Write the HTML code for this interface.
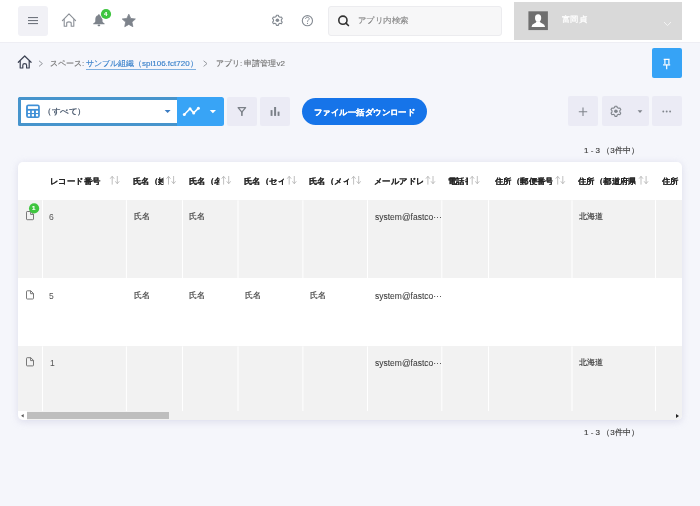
<!DOCTYPE html>
<html lang="ja">
<head>
<meta charset="utf-8">
<style>
*{box-sizing:border-box;margin:0;padding:0}
html,body{width:700px;height:506px;overflow:hidden}
body{background:#f5f6fb;font-family:"Liberation Sans",sans-serif;font-size:8px;color:#333;position:relative}
.a{position:absolute}
.t{white-space:nowrap;line-height:1;-webkit-text-stroke:0.15px currentColor;will-change:transform}
.hd{font-weight:bold;color:#262626;overflow:hidden;-webkit-text-stroke:0.05px currentColor;font-size:8.3px}
.cl{color:#444;-webkit-text-stroke:0.2px currentColor}
.gb{background:#ebebf5;border-radius:2px}
#ov{position:absolute;left:0;top:0;pointer-events:none}
</style>
</head>
<body>
<div class="a" style="left:0;top:0;width:700px;height:43px;background:#fff;border-bottom:1px solid #eeeef4"></div>
<div class="a" style="left:18px;top:6px;width:30px;height:29.5px;background:#f1f1f6;border-radius:3px"></div>
<div class="a" style="left:328px;top:6px;width:174px;height:29.5px;background:#f7f7f8;border:1px solid #ececef;border-radius:3px"></div>
<div class="a t" style="left:358.4px;top:16.3px;color:#8a8a8a;font-size:8.4px;transform:scaleX(1.06);transform-origin:0 0">アプリ内検索</div>
<div class="a" style="left:514px;top:2px;width:168px;height:38px;background:#d9d9d9"></div>
<div class="a t" style="left:562px;top:15.3px;color:#fff;font-size:8.4px;-webkit-text-stroke:0.2px #fff;transform:scaleX(1.04);transform-origin:0 0">富岡貞</div>
<div class="a t" style="left:104px;top:10.5px;width:4px;color:#fff;font-size:6px;font-weight:bold;z-index:2">4</div>

<div class="a t" style="left:50px;top:59.5px;color:#777">スペース:</div>
<div class="a t" style="left:86px;top:59.5px;width:110px;height:9.5px;color:#3b82cb;border-bottom:1px solid #7fb0e0;overflow:hidden">サンプル組織（spl106.fct720）</div>
<div class="a t" style="left:216px;top:59.5px;color:#777">アプリ: 申請管理v2</div>
<div class="a" style="left:652px;top:48px;width:30px;height:30px;background:#36a3f6;border-radius:2px"></div>

<div class="a" style="left:18px;top:97px;width:206px;height:29px;background:#38a4f6;border-radius:2.5px"></div>
<div class="a" style="left:18px;top:97px;width:159px;height:29px;border:3px solid #4694cc;border-right-width:0;border-radius:2.5px 0 0 2.5px;background:#fff"></div>
<div class="a t" style="left:43.3px;top:108px;color:#45556a;transform:scaleX(1.07);transform-origin:0 0;-webkit-text-stroke:0.25px currentColor">（すべて）</div>
<div class="a gb" style="left:227.4px;top:96.8px;width:29.6px;height:29px"></div>
<div class="a gb" style="left:260px;top:96.8px;width:29.7px;height:29px"></div>
<div class="a" style="left:302px;top:98px;width:125px;height:26.5px;background:#1674e9;border-radius:14px"></div>
<div class="a t" style="left:313.6px;top:107.8px;color:#fff;font-weight:bold;font-size:8.4px;-webkit-text-stroke:0.1px #fff;transform:scaleX(1.055);transform-origin:0 0">ファイル一括ダウンロード</div>
<div class="a gb" style="left:568.4px;top:96.4px;width:29.6px;height:29.6px"></div>
<div class="a gb" style="left:601.6px;top:96.4px;width:47.4px;height:29.6px"></div>
<div class="a gb" style="left:652.4px;top:96.4px;width:29.6px;height:29.6px"></div>
<div class="a t" style="left:583.5px;top:147px;color:#3a3a3a">1 - 3 （3件中）</div>

<div class="a" style="left:18px;top:162px;width:664px;height:258.4px;background:#fff;border-radius:5px;box-shadow:0 1.5px 7px rgba(185,185,215,.4);overflow:hidden">
<div class="a" style="left:0;top:38.2px;width:664px;height:78.1px;background:#f2f2f2"></div>
<div class="a" style="left:0;top:184.4px;width:664px;height:64.7px;background:#f2f2f2"></div>
<div class="a t hd" style="left:31.6px;top:15.3px;width:55.1px;transform:scaleX(1.047);transform-origin:0 0">レコード番号</div>
<div class="a t hd" style="left:115.0px;top:15.3px;width:29.2px;transform:scaleX(1.047);transform-origin:0 0">氏名（姓）</div>
<div class="a t hd" style="left:170.7px;top:15.3px;width:28.7px;transform:scaleX(1.047);transform-origin:0 0">氏名（名）</div>
<div class="a t hd" style="left:226.3px;top:15.3px;width:38.2px;transform:scaleX(1.047);transform-origin:0 0">氏名（セイ）</div>
<div class="a t hd" style="left:291.3px;top:15.3px;width:37.6px;transform:scaleX(1.047);transform-origin:0 0">氏名（メイ）</div>
<div class="a t hd" style="left:356.2px;top:15.3px;width:46.6px;transform:scaleX(1.047);transform-origin:0 0">メールアドレス</div>
<div class="a t hd" style="left:429.9px;top:15.3px;width:18.5px;transform:scaleX(1.047);transform-origin:0 0">電話番号</div>
<div class="a t hd" style="left:477.0px;top:15.3px;width:55.2px;transform:scaleX(1.047);transform-origin:0 0">住所（郵便番号）</div>
<div class="a t hd" style="left:560.3px;top:15.3px;width:55.2px;transform:scaleX(1.047);transform-origin:0 0">住所（都道府県）</div>
<div class="a t hd" style="left:643.7px;top:15.3px;width:38.2px;transform:scaleX(1.047);transform-origin:0 0">住所</div>
<div class="a t cl" style="left:31.3px;top:50.5px;font-size:8.5px;color:#555;-webkit-text-stroke:0">6</div>
<div class="a t cl" style="left:115.7px;top:50.5px;font-size:8px">氏名</div>
<div class="a t cl" style="left:171.4px;top:50.5px;font-size:8px">氏名</div>
<div class="a t cl" style="left:356.9px;top:50.5px;font-size:8.5px;-webkit-text-stroke:0.05px currentColor;color:#3a3a3a">system@fastco···</div>
<div class="a t cl" style="left:561.0px;top:50.5px;font-size:8px">北海道</div>
<div class="a t cl" style="left:31.4px;top:129.6px;font-size:8.5px;color:#555;-webkit-text-stroke:0">5</div>
<div class="a t cl" style="left:115.7px;top:129.6px;font-size:8px">氏名</div>
<div class="a t cl" style="left:171.4px;top:129.6px;font-size:8px">氏名</div>
<div class="a t cl" style="left:227.0px;top:129.6px;font-size:8px">氏名</div>
<div class="a t cl" style="left:292.0px;top:129.6px;font-size:8px">氏名</div>
<div class="a t cl" style="left:356.9px;top:129.6px;font-size:8.5px;-webkit-text-stroke:0.05px currentColor;color:#3a3a3a">system@fastco···</div>
<div class="a t cl" style="left:32.0px;top:196.6px;font-size:8.5px;color:#555;-webkit-text-stroke:0">1</div>
<div class="a t cl" style="left:356.9px;top:196.6px;font-size:8.5px;-webkit-text-stroke:0.05px currentColor;color:#3a3a3a">system@fastco···</div>
<div class="a t cl" style="left:561.0px;top:196.6px;font-size:8px">北海道</div>
<div class="a" style="left:9px;top:249.1px;width:655px;height:8.9px;background:#f2f2f2"></div>
<div class="a" style="left:9px;top:250px;width:142.4px;height:7.3px;background:#bebebe"></div>
</div>
<div class="a t" style="left:583.5px;top:429.3px;color:#3a3a3a">1 - 3 （3件中）</div>

<svg id="ov" width="700" height="506" viewBox="0 0 700 506">
<rect x="28" y="17" width="10" height="1.1" fill="#70757e"/>
<rect x="28" y="20" width="10" height="1.1" fill="#70757e"/>
<rect x="28" y="23" width="10" height="1.1" fill="#70757e"/>
<path d="M62.4 20.6 L69 13.9 L75.6 20.6 M64.2 19 V26.3 H66.7 V23.3 Q66.7 21.9 68.95 21.9 Q71.2 21.9 71.2 23.3 V26.3 H73.8 V19" fill="none" stroke="#8a8f96" stroke-width="1.1" stroke-linejoin="round" stroke-linecap="round"/>
<path d="M98.9 14.2 C99.5 14.2 99.8 14.8 99.8 15.2 C101.7 15.7 102.5 17.4 102.5 19.4 V21.3 C102.5 22.3 103.6 23.1 104.6 23.6 V24.2 H93.2 V23.6 C94.2 23.1 95.3 22.3 95.3 21.3 V19.4 C95.3 17.4 96.1 15.7 98 15.2 C98 14.8 98.3 14.2 98.9 14.2Z" fill="#7d838b"/>
<rect x="97.6" y="24.6" width="2.6" height="1.6" rx="0.8" fill="#7d838b"/>
<circle cx="106" cy="14" r="5.9" fill="#fff"/>
<circle cx="106" cy="14" r="5.1" fill="#3ec53f"/>
<path d="M128.80,14.20 L130.74,18.43 L135.36,18.97 L131.94,22.12 L132.86,26.68 L128.80,24.40 L124.74,26.68 L125.66,22.12 L122.24,18.97 L126.86,18.43Z" fill="#7d838b" stroke="#7d838b" stroke-width="0.8" stroke-linejoin="round"/>
<path d="M276.10,16.52 L276.47,15.18 L278.33,15.18 L278.70,16.52 L280.03,17.29 L281.37,16.94 L282.30,18.55 L281.33,19.53 L281.33,21.07 L282.30,22.05 L281.37,23.66 L280.03,23.31 L278.70,24.08 L278.33,25.42 L276.47,25.42 L276.10,24.08 L274.77,23.31 L273.43,23.66 L272.50,22.05 L273.47,21.07 L273.47,19.53 L272.50,18.55 L273.43,16.94 L274.77,17.29Z" fill="none" stroke="#858b93" stroke-width="1.1" stroke-linejoin="round"/>
<circle cx="277.4" cy="20.3" r="1.8" fill="#858b93"/>
<circle cx="307.4" cy="20.7" r="5.1" fill="none" stroke="#858b93" stroke-width="1.1"/>
<path d="M305.6 19 C305.6 17.9 306.3 17.3 307.4 17.3 C308.5 17.3 309.2 17.9 309.2 18.8 C309.2 19.9 307.5 20.1 307.5 21.8" fill="none" stroke="#858b93" stroke-width="1"/>
<circle cx="307.5" cy="23.4" r="0.6" fill="#858b93"/>
<circle cx="342.9" cy="20.2" r="4.1" fill="none" stroke="#333" stroke-width="1.6"/>
<path d="M345.9 23.1 L348.4 25.5" stroke="#333" stroke-width="1.7" stroke-linecap="round"/>
<rect x="527.8" y="10.7" width="20.7" height="20" fill="#dcdcdc"/>
<rect x="528.4" y="11.3" width="19.5" height="18.8" fill="#6f6f6f"/>
<ellipse cx="538.1" cy="18" rx="3.1" ry="3.7" fill="#fff"/>
<path d="M536.4 21.2 Q536.6 22.6 534.2 23.6 Q531.8 24.6 531.5 27 H545.1 Q544.8 24.6 542.2 23.6 Q539.8 22.6 539.9 21.2Z" fill="#fff"/>
<path d="M664 22 L667.5 25.6 L671 22" fill="none" stroke="#f3f3f3" stroke-width="1"/>
<path d="M18.3 62.3 L24.7 56 L31.1 62.3 M20.2 60.6 V68 H22.8 V65.2 Q22.8 63.6 24.7 63.6 Q26.6 63.6 26.6 65.2 V68 H29.2 V60.6" fill="none" stroke="#3d4354" stroke-width="1.2" stroke-linejoin="round" stroke-linecap="round"/>
<path d="M39 60.8 L42.4 63.6 L39 66.4" fill="none" stroke="#8b8e95" stroke-width="0.9"/>
<path d="M203.6 60.8 L207.0 63.6 L203.6 66.4" fill="none" stroke="#8b8e95" stroke-width="0.9"/>
<path d="M663.7 59.4 H669.6 M664.9 59.4 V64 M668.9 59.4 V64 M663.1 64.8 H670.2 M666.7 65.6 V69.2" fill="none" stroke="#fff" stroke-width="1.2"/>
<rect x="26.75" y="105.25" width="12.4" height="12" rx="1.6" fill="#3e8fd6" stroke="#3e8fd6" stroke-width="1.3"/>
<rect x="27.9" y="106.2" width="10.2" height="2.7" fill="#fff"/>
<rect x="27.9" y="110.7" width="2.2" height="2.3" fill="#fff"/>
<rect x="27.9" y="114.1" width="2.2" height="2.3" fill="#fff"/>
<rect x="31.8" y="110.7" width="2.2" height="2.3" fill="#fff"/>
<rect x="31.8" y="114.1" width="2.2" height="2.3" fill="#fff"/>
<rect x="35.9" y="110.7" width="2.2" height="2.3" fill="#fff"/>
<rect x="35.9" y="114.1" width="2.2" height="2.3" fill="#fff"/>
<path d="M164.6 110 H170.6 L167.6 113Z" fill="#3a7cc2"/>
<path d="M184.3 114.5 L190 108.8 L193.7 112.9 L198.4 108.2" fill="none" stroke="#fff" stroke-width="1.6" stroke-linejoin="round"/>
<circle cx="184.3" cy="114.5" r="1.5" fill="#fff"/>
<circle cx="190" cy="108.8" r="1.5" fill="#fff"/>
<circle cx="193.7" cy="112.9" r="1.5" fill="#fff"/>
<circle cx="198.4" cy="108.2" r="1.5" fill="#fff"/>
<path d="M209.8 110 H216 L212.9 113.2Z" fill="#fff"/>
<path d="M238.1 107.7 H245.6 L241.85 112.2Z" fill="none" stroke="#7b8088" stroke-width="1.3" stroke-linejoin="round"/>
<rect x="241.1" y="111.5" width="1.6" height="4.4" fill="#7b8088"/>
<rect x="270.6" y="110.1" width="1.9" height="5.8" fill="#7b8088"/>
<rect x="274.1" y="107" width="2" height="8.9" fill="#7b8088"/>
<rect x="277.6" y="111.6" width="1.9" height="4.3" fill="#7b8088"/>
<path d="M583 107.6 V116 M578.8 111.8 H587.2" stroke="#80858c" stroke-width="1.1"/>
<path d="M614.60,107.52 L614.97,106.18 L616.83,106.18 L617.20,107.52 L618.53,108.29 L619.87,107.94 L620.80,109.55 L619.83,110.53 L619.83,112.07 L620.80,113.05 L619.87,114.66 L618.53,114.31 L617.20,115.08 L616.83,116.42 L614.97,116.42 L614.60,115.08 L613.27,114.31 L611.93,114.66 L611.00,113.05 L611.97,112.07 L611.97,110.53 L611.00,109.55 L611.93,107.94 L613.27,108.29Z" fill="none" stroke="#80858c" stroke-width="1.1" stroke-linejoin="round"/>
<circle cx="615.9" cy="111.3" r="1.8" fill="#80858c"/>
<path d="M637.6 110.2 H642.4 L640 113Z" fill="#80858c"/>
<circle cx="663.3" cy="111.5" r="0.95" fill="#80858c"/>
<circle cx="666.7" cy="111.5" r="0.95" fill="#80858c"/>
<circle cx="670.1" cy="111.5" r="0.95" fill="#80858c"/>
<path d="M112.2 184.6 V176.4 M110.2 178.7 L112.2 176.3 L114.2 178.7 M117.3 176 V183.6 M115.3 181.3 L117.3 183.7 L119.3 181.3" fill="none" stroke="#b0b0b0" stroke-width="0.8"/>
<path d="M168.5 184.6 V176.4 M166.5 178.7 L168.5 176.3 L170.5 178.7 M173.60000000000002 176 V183.6 M171.60000000000002 181.3 L173.60000000000002 183.7 L175.60000000000002 181.3" fill="none" stroke="#b0b0b0" stroke-width="0.8"/>
<path d="M223.6 184.6 V176.4 M221.6 178.7 L223.6 176.3 L225.6 178.7 M228.70000000000002 176 V183.6 M226.70000000000002 181.3 L228.70000000000002 183.7 L230.70000000000002 181.3" fill="none" stroke="#b0b0b0" stroke-width="0.8"/>
<path d="M289.2 184.6 V176.4 M287.2 178.7 L289.2 176.3 L291.2 178.7 M294.3 176 V183.6 M292.3 181.3 L294.3 183.7 L296.3 181.3" fill="none" stroke="#b0b0b0" stroke-width="0.8"/>
<path d="M353.59999999999997 184.6 V176.4 M351.59999999999997 178.7 L353.59999999999997 176.3 L355.59999999999997 178.7 M358.7 176 V183.6 M356.7 181.3 L358.7 183.7 L360.7 181.3" fill="none" stroke="#b0b0b0" stroke-width="0.8"/>
<path d="M427.9 184.6 V176.4 M425.9 178.7 L427.9 176.3 L429.9 178.7 M433.0 176 V183.6 M431.0 181.3 L433.0 183.7 L435.0 181.3" fill="none" stroke="#b0b0b0" stroke-width="0.8"/>
<path d="M472.2 184.6 V176.4 M470.2 178.7 L472.2 176.3 L474.2 178.7 M477.3 176 V183.6 M475.3 181.3 L477.3 183.7 L479.3 181.3" fill="none" stroke="#b0b0b0" stroke-width="0.8"/>
<path d="M557.7 184.6 V176.4 M555.7 178.7 L557.7 176.3 L559.7 178.7 M562.8 176 V183.6 M560.8 181.3 L562.8 183.7 L564.8 181.3" fill="none" stroke="#b0b0b0" stroke-width="0.8"/>
<path d="M641.0 184.6 V176.4 M639.0 178.7 L641.0 176.3 L643.0 178.7 M646.0999999999999 176 V183.6 M644.0999999999999 181.3 L646.0999999999999 183.7 L648.0999999999999 181.3" fill="none" stroke="#b0b0b0" stroke-width="0.8"/>
<path d="M27.2 211.5 H30.8 L33.5 214.2 V219 Q33.5 219.7 32.8 219.7 H27.2 Q26.5 219.7 26.5 219 V212.2 Q26.5 211.5 27.2 211.5Z M30.6 211.5 V214.4 H33.5" fill="none" stroke="#6a6a6a" stroke-width="0.9" stroke-linejoin="round"/>
<path d="M27.2 290.8 H30.8 L33.5 293.5 V298.3 Q33.5 299.0 32.8 299.0 H27.2 Q26.5 299.0 26.5 298.3 V291.5 Q26.5 290.8 27.2 290.8Z M30.6 290.8 V293.7 H33.5" fill="none" stroke="#6a6a6a" stroke-width="0.9" stroke-linejoin="round"/>
<path d="M27.2 357.7 H30.8 L33.5 360.4 V365.2 Q33.5 365.9 32.8 365.9 H27.2 Q26.5 365.9 26.5 365.2 V358.4 Q26.5 357.7 27.2 357.7Z M30.6 357.7 V360.59999999999997 H33.5" fill="none" stroke="#6a6a6a" stroke-width="0.9" stroke-linejoin="round"/>
<circle cx="34.1" cy="208.4" r="5.1" fill="#3ec53f"/>
<path d="M23.7 414 V417.4 L21.1 415.7Z" fill="#555"/>
<path d="M676 413.9 V417.9 L679 415.9Z" fill="#222"/>
<rect x="42.00" y="200.2" width="1" height="78.1" fill="#fff"/>
<rect x="125.90" y="200.2" width="1" height="78.1" fill="#fff"/>
<rect x="182.00" y="200.2" width="1" height="78.1" fill="#fff"/>
<rect x="237.50" y="200.2" width="1" height="78.1" fill="#fff"/>
<rect x="302.40" y="200.2" width="1" height="78.1" fill="#fff"/>
<rect x="367.00" y="200.2" width="1" height="78.1" fill="#fff"/>
<rect x="441.30" y="200.2" width="1" height="78.1" fill="#fff"/>
<rect x="488.00" y="200.2" width="1" height="78.1" fill="#fff"/>
<rect x="571.50" y="200.2" width="1" height="78.1" fill="#fff"/>
<rect x="655.00" y="200.2" width="1" height="78.1" fill="#fff"/>
<rect x="42.00" y="346.4" width="1" height="64.7" fill="#fff"/>
<rect x="125.90" y="346.4" width="1" height="64.7" fill="#fff"/>
<rect x="182.00" y="346.4" width="1" height="64.7" fill="#fff"/>
<rect x="237.50" y="346.4" width="1" height="64.7" fill="#fff"/>
<rect x="302.40" y="346.4" width="1" height="64.7" fill="#fff"/>
<rect x="367.00" y="346.4" width="1" height="64.7" fill="#fff"/>
<rect x="441.30" y="346.4" width="1" height="64.7" fill="#fff"/>
<rect x="488.00" y="346.4" width="1" height="64.7" fill="#fff"/>
<rect x="571.50" y="346.4" width="1" height="64.7" fill="#fff"/>
<rect x="655.00" y="346.4" width="1" height="64.7" fill="#fff"/>
</svg>
<div class="a t" style="left:32.4px;top:205px;width:4px;color:#fff;font-size:6px;font-weight:bold">1</div>
</body>
</html>
